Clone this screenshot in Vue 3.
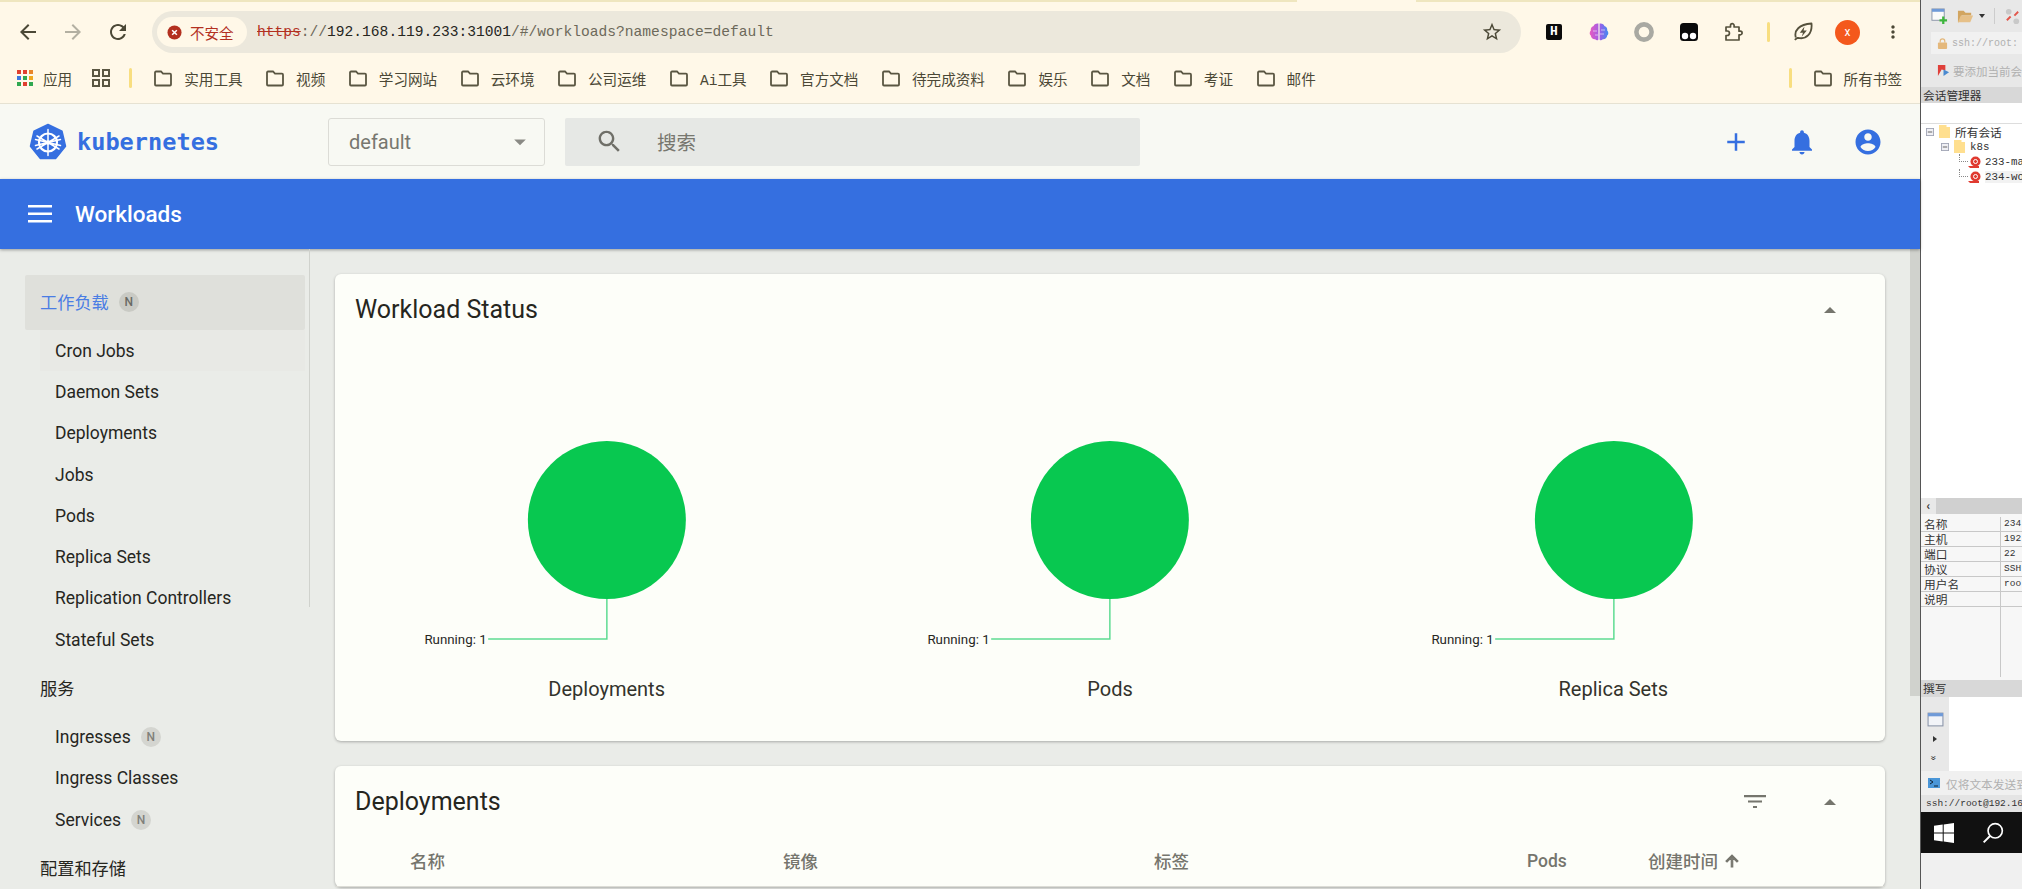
<template>
  <div class="desktop">
    <div class="browser">
      <div class="tab-strip">
        <span class="strip-a"></span>
        <span class="strip-gap"></span>
        <span class="strip-b"></span>
      </div>
      <div class="chrome">
        <div class="nav-row">
          <div class="nav-btns">
            <svg class="nav-icon" viewBox="0 0 24 24"><path d="M20 11H7.83l5.59-5.59L12 4 4 12l8 8 1.41-1.41L7.83 13H20v-2z" /></svg>
            <svg class="nav-icon dim" viewBox="0 0 24 24"><path d="M12 4l-1.41 1.41L16.17 11H4v2h12.17l-5.58 5.59L12 20l8-8z" /></svg>
            <svg class="nav-icon" viewBox="0 0 24 24"><path d="M17.65 6.35C16.2 4.9 14.21 4 12 4c-4.42 0-7.99 3.58-7.99 8s3.57 8 7.99 8c3.73 0 6.84-2.55 7.73-6h-2.08c-.82 2.33-3.04 4-5.65 4-3.31 0-6-2.69-6-6s2.69-6 6-6c1.66 0 3.14.69 4.22 1.78L13 11h7V4l-2.35 2.35z" /></svg>
          </div>
          <div class="omnibox">
            <div class="secure-chip">
              <svg class="err-icon" viewBox="0 0 16 16"><circle cx="8" cy="8" r="7.5" fill="#b3301f" /><path d="M5.5 5.5l5 5M10.5 5.5l-5 5" stroke="#fff" stroke-width="1.6" /></svg>
              <span>不安全</span>
            </div>
            <div class="url"><span class="scheme">https</span><span class="url-dim">://</span><span>192.168.119.233:31001</span><span class="url-dim">/#/workloads?namespace=default</span></div>
            <svg class="star" viewBox="0 0 24 24"><path d="M22 9.24l-7.19-.62L12 2 9.19 8.63 2 9.24l5.46 4.73L5.82 21 12 17.27 18.18 21l-1.63-7.03L22 9.24zM12 15.4l-3.76 2.27 1-4.28-3.32-2.88 4.38-.38L12 6.1l1.71 4.04 4.38.38-3.32 2.88 1 4.28L12 15.4z" /></svg>
          </div>
          <div class="ext-row">
            <span class="ext ext-h">H</span>
            <svg class="ext" viewBox="0 0 20 20">
              <defs><linearGradient id="brain" x1="0" x2="1"><stop offset="0" stop-color="#e85bc0" /><stop offset="0.55" stop-color="#9c5fe8" /><stop offset="1" stop-color="#3f8cf0" /></linearGradient></defs>
              <path d="M9.4 1.500C7 1 5 2.400 4.600 4 2.400 4.600 1.400 6.800 1.800 8.400 0.300 9.800 0.300 12.400 1.800 13.600 2 16 4.200 17.600 6.200 17.300 7.400 18.800 9.400 18.500 9.400 17.200zM10.600 1.500C13 1 15 2.400 15.400 4 17.600 4.600 18.600 6.800 18.200 8.400 19.700 9.800 19.700 12.400 18.200 13.600 18 16 15.800 17.600 13.800 17.300 12.600 18.800 10.600 18.500 10.600 17.200z" fill="url(#brain)" />
              <path d="M4 9h4M12 8h4M6 13h3M11 12h4" stroke="#fff" stroke-width="0.8" opacity="0.7" />
            </svg>
            <svg class="ext" viewBox="0 0 20 20"><circle cx="10" cy="10" r="7.600" fill="none" stroke="#a9a9a2" stroke-width="4.600" /></svg>
            <svg class="ext" viewBox="0 0 20 20"><rect x="1" y="1" width="18" height="18" rx="3.500" fill="#0a0a0a" /><circle cx="6" cy="14" r="3.200" fill="#fff" /><circle cx="14" cy="14" r="3.200" fill="#fff" /></svg>
            <svg class="ext" viewBox="0 0 20 20"><path d="M2 5h4.500V3.500a1.800 1.800 0 0 1 3.600 0V5H15v4.200h1.300a1.800 1.800 0 0 1 0 3.600H15V18H2v-4.500h1.200a2 2 0 0 0 0-4.500H2z" fill="none" stroke="#55513c" stroke-width="1.700" stroke-linejoin="round" /></svg>
            <span class="ext-sep"></span>
            <svg class="ext" viewBox="0 0 20 20"><path d="M2.800 15.500C0.800 8.500 6 2.500 18.500 1.500 19.500 11.500 13.500 18 4.800 15.800c-1 .5-2 1.100-3 2" fill="none" stroke="#55513c" stroke-width="1.800" stroke-linejoin="round" /><path d="M11.500 4.500L6.800 10.800h3.200l-1.300 4L13.800 8.500h-3.200z" fill="#55513c" /></svg>
            <span class="avatar">x</span>
            <svg class="ext" viewBox="0 0 24 24"><path d="M12 8c1.100 0 2-.9 2-2s-.9-2-2-2-2 .9-2 2 .9 2 2 2zm0 2c-1.100 0-2 .9-2 2s.9 2 2 2 2-.9 2-2-.9-2-2-2zm0 6c-1.100 0-2 .9-2 2s.9 2 2 2 2-.9 2-2-.9-2-2-2z" fill="#4b4836" /></svg>
          </div>
        </div>
        <div class="bookmarks">
          <svg class="apps-icon" viewBox="0 0 16 16">
            <rect v-for="c in appDots" :key="c.k" :x="c.x" :y="c.y" width="4" height="4" :fill="c.fill" />
          </svg>
          <span class="bm-text apps-text">应用</span>
          <svg class="grid-icon" viewBox="0 0 18 18" fill="none" stroke="#5a5642" stroke-width="2">
            <rect x="1" y="1" width="6" height="6" /><rect x="11" y="1" width="6" height="6" /><rect x="1" y="11" width="6" height="6" /><rect x="11" y="11" width="6" height="6" />
          </svg>
          <span class="bm-sep"></span>
          <div v-for="b in bookmarks" :key="b" class="bm-item">
            <svg class="folder" viewBox="0 0 20 20"><path d="M2 4.500a1 1 0 0 1 1-1h5l2 2.200h7a1 1 0 0 1 1 1V16.500a1 1 0 0 1-1 1H3a1 1 0 0 1-1-1z" /></svg>
            <span class="bm-text">{{ b }}</span>
          </div>
          <span class="bm-spacer"></span>
          <span class="bm-sep"></span>
          <div class="bm-item bm-all">
            <svg class="folder" viewBox="0 0 20 20"><path d="M2 4.500a1 1 0 0 1 1-1h5l2 2.200h7a1 1 0 0 1 1 1V16.500a1 1 0 0 1-1 1H3a1 1 0 0 1-1-1z" /></svg>
            <span class="bm-text">所有书签</span>
          </div>
        </div>
      </div>

      <header class="k-header">
        <div class="logo">
          <svg class="logo-mark" viewBox="0 0 38 38">
            <path d="M19 1.500L33 8.200 36.500 23.200 26.800 35.400H11.200L1.500 23.200 5 8.200z" fill="#356fe0" stroke="#356fe0" stroke-width="1.500" stroke-linejoin="round" />
            <circle cx="19" cy="19.500" r="9" fill="none" stroke="#fff" stroke-width="2.200" />
            <circle cx="19" cy="19.500" r="2.200" fill="#fff" />
            <path d="M19 6.500V32.500M8 13l22 13M30 13L8 26M6.500 22.500l25-6M31.500 22.500l-25-6" stroke="#fff" stroke-width="1.500" stroke-linecap="round" />
          </svg>
          <span class="logo-text">kubernetes</span>
        </div>
        <div class="ns-select">
          <span>default</span>
          <svg class="ns-caret" viewBox="0 0 24 24"><path d="M5 9l7 7 7-7z" /></svg>
        </div>
        <div class="search">
          <svg class="search-icon" viewBox="0 0 24 24"><path d="M15.500 14h-.79l-.28-.27C15.410 12.590 16 11.110 16 9.500 16 5.910 13.090 3 9.500 3S3 5.910 3 9.500 5.910 16 9.500 16c1.610 0 3.090-.59 4.230-1.570l.27.28v.79l5 4.990L20.490 19l-4.990-5zm-6 0C7.010 14 5 11.990 5 9.500S7.010 5 9.500 5 14 7.010 14 9.500 11.990 14 9.500 14z" /></svg>
          <span>搜索</span>
        </div>
        <div class="head-actions">
          <svg class="head-icon" viewBox="0 0 24 24"><path d="M19 13h-6v6h-2v-6H5v-2h6V5h2v6h6v2z" /></svg>
          <svg class="head-icon" viewBox="0 0 24 24"><path d="M12 22c1.100 0 2-.9 2-2h-4c0 1.100.89 2 2 2zm6-6v-5c0-3.070-1.640-5.640-4.500-6.320V4c0-.83-.67-1.500-1.500-1.500s-1.500.67-1.500 1.500v.68C7.630 5.360 6 7.920 6 11v5l-2 2v1h16v-1l-2-2z" /></svg>
          <svg class="head-icon acct" viewBox="0 0 24 24"><path d="M12 2C6.480 2 2 6.480 2 12s4.480 10 10 10 10-4.480 10-10S17.520 2 12 2zm0 3c1.660 0 3 1.340 3 3s-1.340 3-3 3-3-1.340-3-3 1.340-3 3-3zm0 14.200c-2.500 0-4.710-1.280-6-3.220.03-1.990 4-3.080 6-3.080 1.990 0 5.970 1.090 6 3.080-1.290 1.940-3.500 3.220-6 3.220z" /></svg>
        </div>
      </header>

      <div class="title-bar">
        <svg class="menu-icon" viewBox="0 0 24 18"><path d="M0 0h24v2.500H0zM0 7.500h24v2.500H0zM0 15h24v2.500H0z" /></svg>
        <span>Workloads</span>
      </div>

      <div class="body-row">
        <nav class="sidebar">
          <template v-for="g in navGroups" :key="g.title">
            <div class="nav-group" :class="{ active: g.active }">
              <span>{{ g.title }}</span>
              <span v-if="g.badge" class="n-badge">N</span>
            </div>
            <div v-for="item in g.items" :key="item.name" class="nav-item" :class="{ hovered: item.hovered }">
              <span>{{ item.name }}</span>
              <span v-if="item.badge" class="n-badge light">N</span>
            </div>
          </template>
        </nav>

        <main class="content">
          <section class="card status-card">
            <div class="card-head">
              <h2>Workload Status</h2>
              <svg class="card-caret" viewBox="0 0 24 24"><path d="M6 15l6-6 6 6z" /></svg>
            </div>
            <div class="charts">
              <div v-for="c in charts" :key="c" class="chart">
                <svg class="pie" viewBox="0 0 503 325">
                  <circle cx="251.700" cy="174" r="79" fill="#08c850" />
                  <path d="M251.700 253V293H133" fill="none" stroke="#5fdc92" stroke-width="1.500" />
                  <text x="131.500" y="297.500" text-anchor="end" class="pie-label">Running: 1</text>
                </svg>
                <div class="chart-title">{{ c }}</div>
              </div>
            </div>
          </section>

          <section class="card list-card">
            <div class="card-head">
              <h2>Deployments</h2>
              <svg class="filter-icon" viewBox="0 0 24 24"><path d="M10 18h4v-2h-4v2zM1 5v2.200h22V5H1zm4 7.500h14v-2H5v2z" /></svg>
              <svg class="card-caret" viewBox="0 0 24 24"><path d="M6 15l6-6 6 6z" /></svg>
            </div>
            <div class="table-head">
              <span>名称</span>
              <span>镜像</span>
              <span>标签</span>
              <span>Pods</span>
              <span class="sorted">创建时间
                <svg class="sort-icon" viewBox="0 0 24 24"><path d="M4 12l1.410 1.410L11 7.830V20h2V7.830l5.580 5.590L20 12l-8-8-8 8z" /></svg>
              </span>
            </div>
          </section>
        </main>

        <div class="scrollbar"></div>
      </div>
    </div>

    <aside class="xshell">
      <div class="x-toolbar">
        <div class="x-tools">
          <svg class="x-ico" viewBox="0 0 18 18"><rect x="1" y="1" width="13" height="12" fill="#fafafa" stroke="#8a94a8" /><rect x="1" y="1" width="13" height="3" fill="#6f9ad8" /><path d="M13 9v8M9 13h8" stroke="#3db53d" stroke-width="2.400" /></svg>
          <svg class="x-ico" viewBox="0 0 18 18"><path d="M1 3h6l2 2h6v3H5L2 15H1z" fill="#d2a560" /><path d="M4 8h13l-3 7H1z" fill="#e6c088" /></svg>
          <span class="x-drop"></span>
          <span class="x-div"></span>
          <svg class="x-ico" viewBox="0 0 18 18"><circle cx="5" cy="4" r="3" fill="#c9c9c9" /><circle cx="13" cy="14" r="3" fill="#c9c9c9" /><path d="M3 13l4-4M11 8l4-4" stroke="#e2574c" stroke-width="2" /></svg>
        </div>
        <div class="x-address">
          <svg class="x-lock" viewBox="0 0 12 12"><rect x="1" y="5" width="10" height="7" rx="1" fill="#e4b87c" /><path d="M3.500 5V3.500a2.500 2.500 0 0 1 5 0V5" fill="none" stroke="#e4b87c" stroke-width="1.300" /></svg>
          <span>ssh://root:</span>
        </div>
        <div class="x-hint">
          <svg class="x-flag" viewBox="0 0 14 14"><path d="M1 1h8v6L5 6 1 13z" fill="#e0403a" /><path d="M7 6l6 3-6 4z" fill="#4a8ad0" /></svg>
          <span>要添加当前会</span>
        </div>
      </div>
      <div class="x-title">会话管理器</div>
      <div class="x-filter"></div>
      <div class="x-tree">
        <div v-for="row in treeRows" :key="row.label" class="tree-row" :class="row.cls">
          <svg v-if="row.kind === 'folder'" class="tree-box" viewBox="0 0 9 9"><rect x="0.500" y="0.500" width="8" height="8" fill="#f0f0f4" stroke="#a0a4b4" /><path d="M2 4.500h5" stroke="#555" /></svg>
          <svg v-if="row.kind === 'folder'" class="tree-folder" viewBox="0 0 11 13"><path d="M0 0h7.500v2H11v11H0z" fill="#ffdf8f" /></svg>
          <template v-else>
            <span class="tree-link"></span>
            <svg class="tree-snail" viewBox="0 0 13 12"><circle cx="7.500" cy="5.500" r="5" fill="#e03a30" /><circle cx="7.500" cy="5.500" r="2" fill="none" stroke="#fff" /><path d="M0 10h11v2H2z" fill="#e03a30" /></svg>
          </template>
          <span class="tree-label" :class="{ 'tree-mono': row.mono }">{{ row.label }}</span>
        </div>
      </div>
      <div class="x-hscroll"><span class="x-arrow">‹</span></div>
      <div class="x-props">
        <div v-for="p in propRows" :key="p.k" class="prop-row">
          <span class="prop-key">{{ p.k }}</span>
          <span class="prop-val">{{ p.v }}</span>
        </div>
        <div class="prop-fill"><span class="prop-key"></span></div>
      </div>
      <div class="x-title compose-title">撰写</div>
      <div class="x-compose">
        <div class="compose-side">
          <svg class="x-ico" viewBox="0 0 16 16"><rect x="1" y="2" width="14" height="12" fill="#f2f4f8" stroke="#8a94a8" /><rect x="1" y="2" width="14" height="3" fill="#6f9ad8" /></svg>
          <span class="side-play"></span>
          <span class="side-more">»</span>
        </div>
      </div>
      <div class="x-send">
        <svg class="send-ico" viewBox="0 0 12 10"><rect width="12" height="10" fill="#4a96d8" /><path d="M2 2l3 2-3 2M6 8h4" stroke="#123" fill="none" /></svg>
        <span>仅将文本发送到</span>
      </div>
      <div class="x-status">ssh://root@192.16</div>
      <div class="taskbar">
        <svg class="win-logo" viewBox="0 0 20 20"><path d="M0 2.800L8.700 1.500v8H0zM9.700 1.400L20 0v9.500H9.700zM0 10.500h8.700v8L0 17.200zM9.700 10.500H20V20L9.700 18.600z" fill="#fff" /></svg>
        <svg class="win-search" viewBox="0 0 20 20"><circle cx="12" cy="8" r="6.500" fill="none" stroke="#fff" stroke-width="1.500" /><path d="M7.500 12.500L1.500 18.500" stroke="#fff" stroke-width="1.800" /></svg>
      </div>
    </aside>
  </div>
</template>

<script setup>
const dotColors = ['#e0402f', '#e0402f', '#e8852a', '#3b78e0', '#30a850', '#f0a820', '#30a850', '#e0402f', '#30a850']
const appDots = dotColors.map((fill, k) => ({
  k,
  fill,
  x: (k % 3) * 6,
  y: Math.floor(k / 3) * 6
}))

const bookmarks = ['实用工具', '视频', '学习网站', '云环境', '公司运维', 'Ai工具', '官方文档', '待完成资料', '娱乐', '文档', '考证', '邮件']

const navGroups = [
  {
    title: '工作负载',
    active: true,
    badge: true,
    items: [
      { name: 'Cron Jobs', hovered: true },
      { name: 'Daemon Sets' },
      { name: 'Deployments' },
      { name: 'Jobs' },
      { name: 'Pods' },
      { name: 'Replica Sets' },
      { name: 'Replication Controllers' },
      { name: 'Stateful Sets' }
    ]
  },
  {
    title: '服务',
    items: [
      { name: 'Ingresses', badge: true },
      { name: 'Ingress Classes' },
      { name: 'Services', badge: true }
    ]
  },
  { title: '配置和存储', items: [] }
]

const charts = ['Deployments', 'Pods', 'Replica Sets']

const treeRows = [
  { label: '所有会话', kind: 'folder', cls: 'lv0' },
  { label: 'k8s', kind: 'folder', cls: 'lv1', mono: true },
  { label: '233-ma', kind: 'host', cls: 'lv2', mono: true },
  { label: '234-wo', kind: 'host', cls: 'lv2 picked', mono: true }
]

const propRows = [
  { k: '名称', v: '234' },
  { k: '主机', v: '192' },
  { k: '端口', v: '22' },
  { k: '协议', v: 'SSH' },
  { k: '用户名', v: 'roo' },
  { k: '说明', v: '' }
]
</script>

<style>
html, body {
  margin: 0;
  overflow: hidden;
}
</style>

<style scoped>
.desktop {
  display: flex;
  width: 2022px;
  height: 889px;
  overflow: hidden;
  background: #000;
  font-family: Roboto, "Noto Sans CJK SC", sans-serif;
}

.browser {
  display: flex;
  flex-direction: column;
  width: 1920px;
  height: 889px;
  flex: none;
  background: #eaece8;
}

/* browser chrome */
.tab-strip {
  display: flex;
  height: 2px;
  flex: none;
  background: #fff8e8;
}
.strip-a { width: 1297px; background: #efe6bf; }
.strip-gap { width: 119px; }
.strip-b { flex: 1; background: #efe6bf; }

.chrome {
  height: 102px;
  box-sizing: border-box;
  flex: none;
  background: #fff8e8;
  border-bottom: 1px solid #e6e2d2;
}

.nav-row {
  display: flex;
  align-items: center;
  height: 60px;
  padding-left: 16px;
}

.nav-btns {
  display: flex;
  gap: 21px;
  width: 136px;
  flex: none;
}

.nav-icon {
  width: 24px;
  height: 24px;
  fill: #4b4836;
}
.nav-icon.dim { fill: #b3b0a2; }

.omnibox {
  display: flex;
  align-items: center;
  width: 1369px;
  height: 42px;
  flex: none;
  padding: 0 18px 0 5px;
  box-sizing: border-box;
  background: #ece8dc;
  border-radius: 21px;
}

.secure-chip {
  display: flex;
  align-items: center;
  gap: 8px;
  width: 90px;
  height: 30px;
  padding-left: 10px;
  box-sizing: border-box;
  flex: none;
  background: #fff8e8;
  border-radius: 15px;
  font-size: 14.500px;
  color: #b3301f;
}

.err-icon { width: 15px; height: 15px; flex: none; }

.url {
  margin-left: 10px;
  font-family: "Liberation Mono", monospace;
  font-size: 14.600px;
  color: #26261e;
  white-space: nowrap;
}
.scheme { color: #b3301f; text-decoration: line-through; }
.url-dim { color: #6c695a; }

.star {
  width: 22px;
  height: 22px;
  margin-left: auto;
  fill: #4b4836;
  flex: none;
}

.ext-row {
  display: flex;
  align-items: center;
  margin-left: 23px;
}

.ext {
  width: 20px;
  height: 20px;
  margin-right: 25px;
  flex: none;
}

.ext-h {
  width: 16px;
  height: 16px;
  margin: 0 27px 0 2px;
  background: #0a0a0a;
  border-radius: 2px;
  color: #fff;
  font-size: 13px;
  font-weight: 700;
  line-height: 16px;
  text-align: center;
  font-family: "Liberation Mono", monospace;
}

.ext-sep {
  width: 3px;
  height: 20px;
  margin: 0 23px 0 -2px;
  background: #f8de80;
  border-radius: 2px;
}

.avatar {
  width: 25px;
  height: 25px;
  margin: 0 23px 0 -3px;
  background: #f4581c;
  border-radius: 50%;
  color: #fff;
  font-size: 12px;
  line-height: 24px;
  text-align: center;
  flex: none;
}

.bookmarks {
  display: flex;
  align-items: center;
  height: 32px;
  padding: 0 18px 4px 17px;
}

.apps-icon { width: 16px; height: 16px; flex: none; }
.apps-text { margin-left: 10px; }
.grid-icon { width: 18px; height: 18px; margin-left: 20px; flex: none; }

.bm-sep {
  width: 3px;
  height: 20px;
  margin: 0 21px 0 19px;
  background: #f8de80;
  border-radius: 2px;
  flex: none;
}

.bm-item {
  display: flex;
  align-items: center;
  gap: 11px;
  margin-right: 22.500px;
}
.bm-item.bm-all { margin-right: 0; }

.bm-spacer { flex: 1; }

.folder {
  width: 20px;
  height: 20px;
  fill: none;
  stroke: #5a5642;
  stroke-width: 1.800;
  flex: none;
}

.bm-text {
  font-family: "Liberation Mono", "Noto Sans CJK SC", monospace;
  font-size: 14.600px;
  color: #4b4836;
  white-space: nowrap;
}

/* dashboard header */
.k-header {
  display: flex;
  align-items: center;
  height: 75px;
  background: #f8f9f3;
  flex: none;
}

.logo {
  display: flex;
  align-items: center;
  gap: 10px;
  width: 299px;
  padding-left: 29px;
  flex: none;
  box-sizing: border-box;
  margin-top: 1px;
}

.logo-mark { width: 38px; height: 38px; flex: none; }

.logo-text {
  font-family: "DejaVu Sans Mono", monospace;
  font-size: 23.600px;
  font-weight: 700;
  color: #356fe0;
}

.ns-select {
  display: flex;
  align-items: center;
  justify-content: space-between;
  width: 217px;
  height: 48px;
  padding: 0 14px 0 20px;
  margin-left: 29px;
  box-sizing: border-box;
  border: 1px solid #dcdcd6;
  border-radius: 3px;
  font-size: 20px;
  color: #77776f;
  flex: none;
}

.ns-caret { width: 20px; height: 20px; fill: #8a8a84; }

.search {
  display: flex;
  align-items: center;
  width: 575px;
  height: 48px;
  margin-left: 20px;
  background: #e6e8e5;
  border-radius: 2px;
  font-size: 19.500px;
  color: #77776f;
  flex: none;
}

.search-icon {
  width: 29px;
  height: 29px;
  margin: 0 33px 0 30px;
  fill: #6f6f68;
}

.head-actions {
  display: flex;
  align-items: center;
  gap: 36px;
  margin-left: auto;
  padding-right: 37px;
}

.head-icon {
  width: 30px;
  height: 30px;
  fill: #356fe0;
}

.title-bar {
  display: flex;
  align-items: center;
  height: 70px;
  padding-left: 28px;
  background: #356fe0;
  color: #fff;
  font-size: 22.500px;
  font-weight: 500;
  box-shadow: 0 1px 3px rgba(0, 0, 0, 0.35);
  flex: none;
  position: relative;
}

.menu-icon {
  width: 24px;
  height: 18px;
  margin-right: 23px;
  fill: #fff;
}

.body-row {
  display: flex;
  flex: 1;
  min-height: 0;
}

/* sidebar */
.sidebar {
  position: relative;
  width: 310px;
  padding: 26px 5px 0 25px;
  box-sizing: border-box;
  flex: none;
  font-size: 17.500px;
  color: #26261e;
}

.sidebar::after {
  content: "";
  position: absolute;
  top: 0;
  right: 0;
  width: 1px;
  height: 358px;
  background: #d0d2cd;
}

.nav-group {
  display: flex;
  align-items: center;
  gap: 10px;
  height: 56px;
  padding-left: 15px;
  padding-bottom: 1px;
  box-sizing: border-box;
  font-size: 17.200px;
}

.nav-group.active {
  height: 55px;
  padding-bottom: 2px;
  background: #dfe0db;
  border-radius: 2px;
  color: #4a7de4;
}

.nav-item {
  display: flex;
  align-items: center;
  gap: 10px;
  height: 41.300px;
  margin-left: 15px;
  padding-left: 15px;
}

.nav-item.hovered { background: #e8e9e5; }

.n-badge {
  width: 20px;
  height: 20px;
  background: #c9cac4;
  border-radius: 50%;
  color: #6a6a64;
  font-size: 12px;
  font-weight: 500;
  line-height: 20px;
  text-align: center;
}
.n-badge.light { background: #d4d5d0; color: #80807a; }

/* main content */
.content {
  flex: 1;
  min-width: 0;
  padding: 25px 25px 0;
  overflow: hidden;
}

.card {
  background: #fdfef9;
  border-radius: 6px;
  box-shadow: 0 1px 3px rgba(0, 0, 0, 0.28);
}

.status-card {
  height: 467px;
  margin-bottom: 25px;
}

.card-head {
  display: flex;
  align-items: center;
  height: 72px;
  padding: 0 43px 0 20px;
  box-sizing: border-box;
}

.card-head h2 {
  margin: -2px auto 0 0;
  font-size: 25px;
  font-weight: 400;
  color: #26261e;
}

.card-caret {
  width: 24px;
  height: 24px;
  margin-top: -1px;
  fill: #75756d;
  flex: none;
}

.filter-icon {
  width: 24px;
  height: 24px;
  margin-right: 51px;
  fill: #75756d;
  flex: none;
}

.charts {
  display: grid;
  grid-template-columns: repeat(3, 1fr);
  padding: 0 20px;
}

.pie {
  display: block;
  width: 100%;
  height: 325px;
}

.pie-label {
  font-size: 13.300px;
  fill: #26261e;
}

.chart-title {
  height: 36px;
  font-size: 20px;
  line-height: 37px;
  text-align: center;
  color: #33332c;
}

.table-head {
  display: grid;
  grid-template-columns: 373px 371px 373px 121px 1fr;
  align-items: center;
  height: 49px;
  padding: 0 0 3px 75px;
  box-sizing: border-box;
  border-bottom: 1px solid #dcdcd6;
  font-size: 17.500px;
  font-weight: 500;
  color: #75756d;
}

.sorted {
  display: flex;
  align-items: center;
  gap: 5px;
}

.sort-icon {
  width: 18px;
  height: 18px;
  fill: #75756d;
  stroke: #75756d;
  stroke-width: 1.500;
}

.scrollbar {
  width: 10px;
  height: 447px;
  background: #d0d2cd;
  flex: none;
}

/* xshell panel on the right */
.xshell {
  display: flex;
  flex-direction: column;
  width: 102px;
  height: 889px;
  flex: none;
  overflow: hidden;
  box-sizing: border-box;
  border-left: 1px solid #555;
  background: #f0f0f0;
  font-size: 11.700px;
  font-family: "Noto Sans CJK SC", sans-serif;
  color: #333;
  white-space: nowrap;
}

.x-toolbar {
  height: 87px;
  padding-left: 10px;
  background: #e8e8e8;
  box-sizing: border-box;
  flex: none;
}

.x-tools {
  display: flex;
  align-items: center;
  gap: 9px;
  height: 32px;
}

.x-ico {
  width: 17px;
  height: 17px;
  flex: none;
}

.x-drop {
  width: 0;
  height: 0;
  margin-left: -4px;
  border: 3px solid transparent;
  border-top: 4px solid #333;
  border-bottom: 0;
}

.x-div {
  width: 1px;
  height: 16px;
  background: #ccc;
}

.x-address {
  display: flex;
  align-items: center;
  gap: 4px;
  height: 22px;
  padding-left: 6px;
  background: #f1f1f1;
  font-family: "Liberation Mono", monospace;
  font-size: 10px;
  color: #b0b0b0;
}

.x-lock { width: 11px; height: 11px; flex: none; }

.x-hint {
  display: flex;
  align-items: center;
  gap: 3px;
  height: 33px;
  padding-left: 6px;
  color: #b0b0b0;
  font-size: 11.500px;
}

.x-flag { width: 13px; height: 13px; flex: none; }

.x-title {
  height: 16px;
  padding-left: 2px;
  background: #d8d8d8;
  line-height: 16px;
  flex: none;
}

.compose-title { height: 17px; }

.x-filter {
  height: 21px;
  background: #fff;
  border-bottom: 1px solid #ddd;
  box-sizing: border-box;
  flex: none;
}

.x-tree {
  height: 374px;
  background: #fff;
  flex: none;
}

.tree-row {
  display: flex;
  align-items: center;
  height: 15px;
}

.lv0 { padding-left: 5px; gap: 5px; }
.lv1 { padding-left: 20px; gap: 5px; }
.lv2 { padding-left: 38px; gap: 0; }
.picked .tree-label { background: #f2f2f2; }

.tree-box { width: 8px; height: 8px; flex: none; }
.tree-folder { width: 11px; height: 13px; flex: none; }
.tree-snail { width: 13px; height: 12px; margin-right: 4px; flex: none; }

.tree-link {
  align-self: flex-start;
  width: 9px;
  height: 8px;
  box-sizing: border-box;
  border-left: 1px dotted #888;
  border-bottom: 1px dotted #888;
  flex: none;
}

.tree-mono {
  font-family: "Liberation Mono", monospace;
  font-size: 10.800px;
}

.x-hscroll {
  display: flex;
  height: 16px;
  background: #d0d0d0;
  flex: none;
}

.x-arrow {
  width: 15px;
  background: #e8e8e8;
  text-align: center;
  line-height: 14px;
  font-weight: 700;
}

.x-props {
  display: flex;
  flex-direction: column;
  height: 166px;
  padding-top: 3px;
  background: #f7f7f7;
  box-sizing: border-box;
  flex: none;
}

.prop-row {
  display: flex;
  height: 15px;
  line-height: 14px;
  box-sizing: border-box;
  border-bottom: 1px solid #c8c8c8;
  flex: none;
}

.prop-key {
  width: 80px;
  padding-left: 3px;
  box-sizing: border-box;
  border-right: 1px solid #c8c8c8;
  flex: none;
}

.prop-val {
  padding-left: 3px;
  font-family: "Liberation Mono", monospace;
  font-size: 9.500px;
}

.prop-fill {
  display: flex;
  flex: 1;
  margin-bottom: 3px;
}

.x-compose {
  display: flex;
  height: 74px;
  background: #fff;
  flex: none;
}

.compose-side {
  display: flex;
  flex-direction: column;
  align-items: center;
  width: 28px;
  height: 100%;
  padding-top: 14px;
  box-sizing: border-box;
  background: #e8e8e8;
}

.side-play {
  width: 0;
  height: 0;
  margin-top: 8px;
  border: 3px solid transparent;
  border-left: 4px solid #333;
  border-right: 0;
}

.side-more {
  margin-top: 10px;
  font-size: 11px;
  line-height: 12px;
  transform: rotate(90deg);
}

.x-send {
  display: flex;
  align-items: center;
  gap: 6px;
  height: 24px;
  padding-left: 7px;
  color: #b0b0b0;
  flex: none;
}

.send-ico { width: 12px; height: 10px; flex: none; }

.x-status {
  height: 17px;
  padding-left: 5px;
  background: #e4e4e4;
  font-family: "Liberation Mono", monospace;
  font-size: 9.500px;
  line-height: 17px;
  flex: none;
}

.taskbar {
  display: flex;
  align-items: center;
  gap: 28px;
  height: 41px;
  padding-left: 13px;
  background: #111;
  flex: none;
}

.win-logo { width: 20px; height: 20px; flex: none; }
.win-search { width: 22px; height: 22px; flex: none; }
</style>
